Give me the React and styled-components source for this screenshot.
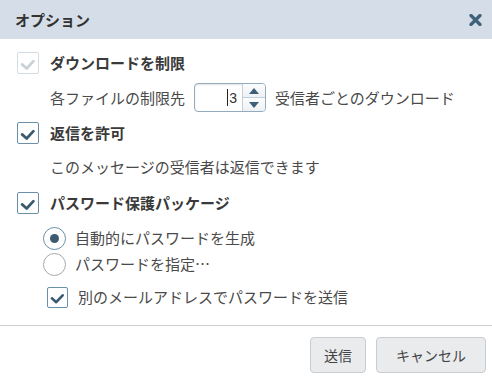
import styled, { createGlobalStyle } from "styled-components";

const Global = createGlobalStyle`
    html, body {
        margin: 0;
        padding: 0;
        background: #fff;
    }
    body {
        font-family: "Noto Sans CJK JP", "Noto Sans", sans-serif;
        color: #444;
    }
`

const Dialog = styled.div`
    width: 492px;
    height: 384px;
    display: flex;
    flex-direction: column;
    background: #fff;
`

const Header = styled.div`
    height: 39px;
    flex-shrink: 0;
    background: #d5dee8;
    display: flex;
    align-items: center;
    justify-content: space-between;
    padding: 0 10px 0 15px;
`

const Title = styled.div`
    font-size: 15px;
    font-weight: 700;
    color: #333;
    line-height: 20px;
`

const Close = styled.button`
    border: 0;
    background: none;
    padding: 0;
    width: 13px;
    height: 12px;
    display: flex;
    cursor: pointer;
`

const Body = styled.div`
    flex: 1;
    display: flex;
    flex-direction: column;
    padding: 7px 0 0 17px;
`

const Row = styled.div`
    height: ${p => p.$h}px;
    display: flex;
    align-items: center;
    padding-left: ${p => p.$indent || 0}px;
    flex-shrink: 0;
`

const Box = styled.span`
    width: ${p => p.$size || 22}px;
    height: ${p => p.$size || 22}px;
    box-sizing: border-box;
    border: 1px solid ${p => (p.$disabled ? "#d3dce3" : "#6a8fa8")};
    border-radius: 2px;
    background: #fff;
    display: flex;
    align-items: center;
    justify-content: center;
    flex-shrink: 0;
    margin-right: ${p => p.$gap || 11}px;
`

const Radio = styled.span`
    width: 23px;
    height: 23px;
    box-sizing: border-box;
    border-radius: 50%;
    border: 1px solid ${p => (p.$on ? "#6a8fa8" : "#a9a9a9")};
    display: flex;
    align-items: center;
    justify-content: center;
    flex-shrink: 0;
    margin-right: 9px;

    &::after {
        content: "";
        display: ${p => (p.$on ? "block" : "none")};
        width: 9px;
        height: 9px;
        border-radius: 50%;
        background: #3b5b73;
    }
`

const Label = styled.span`
    font-size: 15px;
    line-height: 20px;
    font-weight: ${p => (p.$bold ? 700 : 400)};
    color: ${p => (p.$bold ? "#3a3a3a" : "#4a4a4a")};
    white-space: nowrap;
`

const Spin = styled.div`
    display: flex;
    width: 72px;
    height: 29px;
    box-sizing: border-box;
    border: 1px solid #93abbd;
    border-radius: 4px;
    box-shadow: inset 0 1px 2px rgba(0, 0, 0, 0.12);
    margin: 0 9px 0 9px;
    overflow: hidden;
    background: #fff;
`

const SpinValue = styled.div`
    flex: 1;
    display: flex;
    align-items: center;
    justify-content: flex-end;
    padding-right: 5px;
    font-family: "Liberation Sans", Arial, sans-serif;
    font-size: 14px;
    color: #333;
`

const Caret = styled.span`
    width: 1px;
    height: 17px;
    background: #222;
    margin-right: 1px;
`

const SpinButtons = styled.div`
    width: 22px;
    display: flex;
    flex-direction: column;
    border-left: 1px solid #c3cfd8;
`

const SpinBtn = styled.div`
    flex: 1;
    display: flex;
    align-items: center;
    justify-content: center;
    background: linear-gradient(#fbfcfd, #eef1f4);
    border-top: ${p => (p.$down ? "1px solid #c3cfd8" : "0")};
`

const Footer = styled.div`
    height: 59px;
    flex-shrink: 0;
    border-top: 1px solid #cfcfcf;
    display: flex;
    justify-content: flex-end;
    align-items: flex-start;
    gap: 10px;
    padding: 11px 6px 0 0;
    box-sizing: border-box;
`

const Button = styled.button`
    height: 36px;
    padding: 0 ${p => p.$pad}px;
    border: 1px solid #c9cdd1;
    border-radius: 4px;
    background: #e9ebed;
    font-family: "Noto Sans CJK JP", "Noto Sans", sans-serif;
    font-size: 14px;
    color: #444;
    cursor: pointer;
`

const Check = ({ color }) => (
    <svg width="22" height="22" viewBox="0 0 22 22">
        <path d="M4.5 12.5 L9.5 17 L17 9" fill="none" stroke={color} strokeWidth="3" strokeLinecap="round" strokeLinejoin="round" />
    </svg>
)

const CheckBox = ({ disabled, size, gap }) => (
    <Box $disabled={disabled} $size={size} $gap={gap}>
        <Check color={disabled ? "#c9d0d6" : "#3b5a70"} />
    </Box>
)

const App = () => {
    return (
        <>
            <Global />
            <Dialog>
                <Header>
                    <Title>オプション</Title>
                    <Close aria-label="閉じる">
                        <svg width="13" height="12" viewBox="0 0 13 12">
                            <path d="M2 1.5 L11 10.5 M11 1.5 L2 10.5" stroke="#3f6179" strokeWidth="3.2" strokeLinecap="round" />
                        </svg>
                    </Close>
                </Header>
                <Body>
                    <Row $h={34}>
                        <CheckBox disabled />
                        <Label $bold>ダウンロードを制限</Label>
                    </Row>
                    <Row $h={35} $indent={33}>
                        <Label>各ファイルの制限先</Label>
                        <Spin>
                            <SpinValue>
                                <Caret />3
                            </SpinValue>
                            <SpinButtons>
                                <SpinBtn>
                                    <svg width="10" height="6" viewBox="0 0 10 6"><path d="M0 6 L5 0 L10 6 Z" fill="#3d5e76" /></svg>
                                </SpinBtn>
                                <SpinBtn $down>
                                    <svg width="10" height="6" viewBox="0 0 10 6"><path d="M0 0 L5 6 L10 0 Z" fill="#3d5e76" /></svg>
                                </SpinBtn>
                            </SpinButtons>
                        </Spin>
                        <Label>受信者ごとのダウンロード</Label>
                    </Row>
                    <Row $h={36}>
                        <CheckBox />
                        <Label $bold>返信を許可</Label>
                    </Row>
                    <Row $h={32} $indent={33}>
                        <Label>このメッセージの受信者は返信できます</Label>
                    </Row>
                    <Row $h={40}>
                        <CheckBox />
                        <Label $bold>パスワード保護パッケージ</Label>
                    </Row>
                    <Row $h={30} $indent={26}>
                        <Radio $on />
                        <Label>自動的にパスワードを生成</Label>
                    </Row>
                    <Row $h={22} $indent={26}>
                        <Radio />
                        <Label>パスワードを指定…</Label>
                    </Row>
                    <Row $h={44} $indent={30}>
                        <CheckBox size={21} gap={10} />
                        <Label>別のメールアドレスでパスワードを送信</Label>
                    </Row>
                </Body>
                <Footer>
                    <Button $pad={13}>送信</Button>
                    <Button $pad={19}>キャンセル</Button>
                </Footer>
            </Dialog>
        </>
    )
}

export default App;
